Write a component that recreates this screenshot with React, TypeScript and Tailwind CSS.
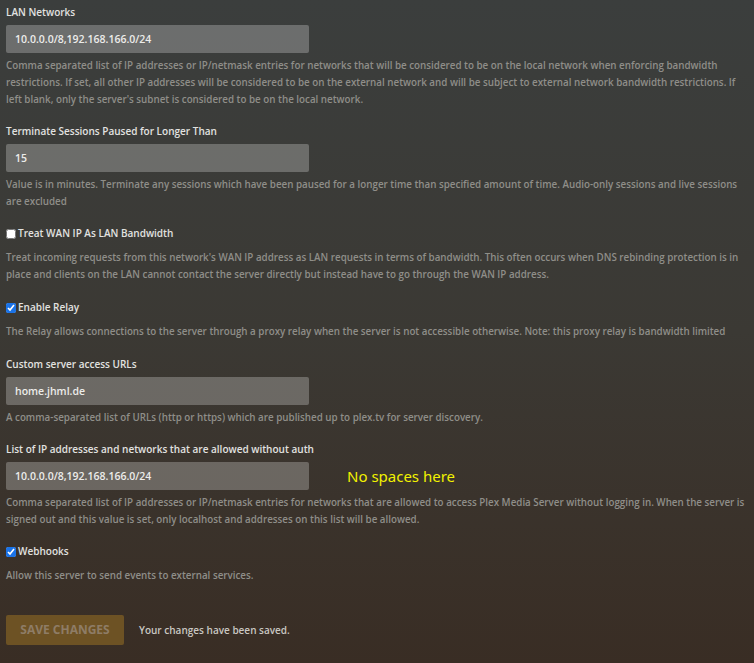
import React from 'react';

const font = { fontFamily: '"Open Sans", "Liberation Sans", sans-serif' };

const Label: React.FC<{ children: React.ReactNode }> = ({ children }) => (
  <div className="text-[10px] leading-[17px] font-semibold text-[#e2e2e0]">{children}</div>
);

const Help: React.FC<{ children: React.ReactNode }> = ({ children }) => (
  <p className="text-[9.8px] leading-[17px] font-semibold text-[#8f8e89]">{children}</p>
);

const TextField: React.FC<{ label: string; value: string; help: string; aside?: React.ReactNode }> = ({
  label,
  value,
  help,
  aside,
}) => (
  <div>
    <Label>{label}</Label>
    <div className="mt-1 flex items-center">
      <input
        readOnly
        value={value}
        className="w-[303px] h-[28px] rounded-[2px] bg-[#ffffff]/25 px-[9px] text-[10.5px] font-semibold text-[#ececea] outline-none"
      />
      {aside}
    </div>
    <div className="mt-1">
      <Help>{help}</Help>
    </div>
  </div>
);

const CheckField: React.FC<{ label: string; checked: boolean; help: string }> = ({ label, checked, help }) => (
  <div className="pb-[1px]">
    <label className="flex items-center gap-[2px] text-[10px] leading-[17px] font-semibold text-[#e2e2e0]">
      <input type="checkbox" readOnly checked={checked} className="m-0 h-[10px] w-[10px] accent-[#1a73e8]" />
      {label}
    </label>
    <div className="mt-[7px]">
      <Help>{help}</Help>
    </div>
  </div>
);

export default function App() {
  return (
    <div
      style={font}
      className="min-h-[663px] w-full bg-gradient-to-b from-[#3b3e3d] via-[#3b3934] to-[#392d24] px-[6px] pt-[4px] pb-[18px]"
    >
      <div className="flex flex-col gap-[15px] pr-[2px]">
        <TextField
          label="LAN Networks"
          value="10.0.0.0/8,192.168.166.0/24"
          help="Comma separated list of IP addresses or IP/netmask entries for networks that will be considered to be on the local network when enforcing bandwidth restrictions. If set, all other IP addresses will be considered to be on the external network and will be subject to external network bandwidth restrictions. If left blank, only the server's subnet is considered to be on the local network."
        />
        <TextField
          label="Terminate Sessions Paused for Longer Than"
          value="15"
          help="Value is in minutes. Terminate any sessions which have been paused for a longer time than specified amount of time. Audio-only sessions and live sessions are excluded"
        />
        <CheckField
          label="Treat WAN IP As LAN Bandwidth"
          checked={false}
          help="Treat incoming requests from this network's WAN IP address as LAN requests in terms of bandwidth. This often occurs when DNS rebinding protection is in place and clients on the LAN cannot contact the server directly but instead have to go through the WAN IP address."
        />
        <CheckField
          label="Enable Relay"
          checked={true}
          help="The Relay allows connections to the server through a proxy relay when the server is not accessible otherwise. Note: this proxy relay is bandwidth limited"
        />
        <TextField
          label="Custom server access URLs"
          value="home.jhml.de"
          help="A comma-separated list of URLs (http or https) which are published up to plex.tv for server discovery."
        />
        <TextField
          label="List of IP addresses and networks that are allowed without auth"
          value="10.0.0.0/8,192.168.166.0/24"
          help="Comma separated list of IP addresses or IP/netmask entries for networks that are allowed to access Plex Media Server without logging in. When the server is signed out and this value is set, only localhost and addresses on this list will be allowed."
          aside={
            <span
              className="ml-[38px] text-[15px] text-[#f2f200]"
              style={{ fontFamily: '"Noto Sans", "Open Sans", sans-serif' }}
            >
              No spaces here
            </span>
          }
        />
        <CheckField label="Webhooks" checked={true} help="Allow this server to send events to external services." />
      </div>
      <div className="mt-[30px] flex items-center gap-[15px]">
        <button className="h-[30px] w-[118px] rounded-[2px] bg-[#6d5224] text-[12px] font-bold uppercase text-[#8e7c66]">
          Save Changes
        </button>
        <span className="text-[10px] font-semibold text-[#c9c7c2]">Your changes have been saved.</span>
      </div>
    </div>
  );
}
